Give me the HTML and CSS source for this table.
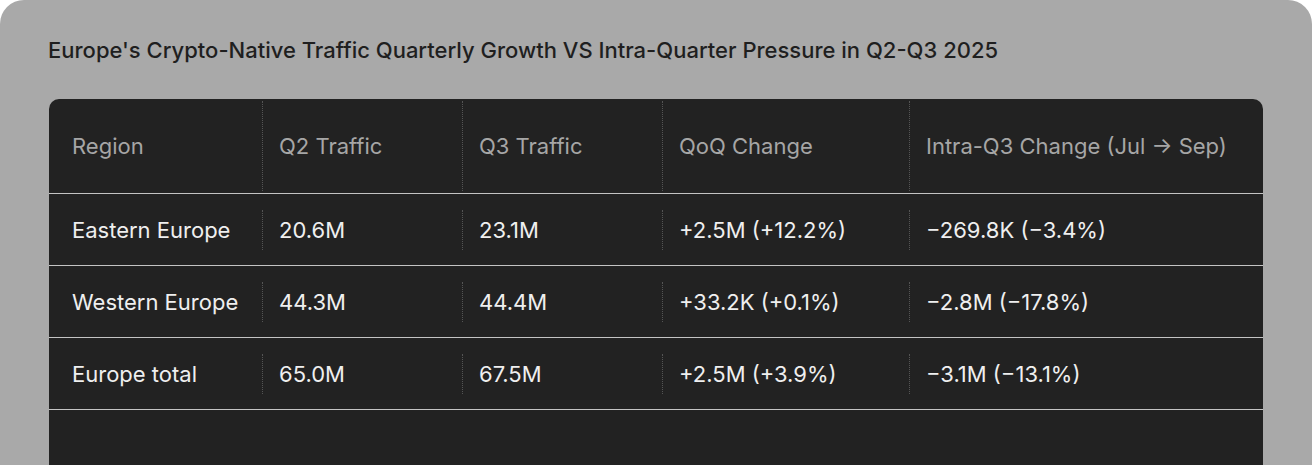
FILE: index.html
```html
<!DOCTYPE html>
<html lang="en">
<head>
<meta charset="utf-8">
<title>Europe Crypto-Native Traffic</title>
<link rel="stylesheet" href="styles.css">
</head>
<body>
<div class="card">
  <h1 class="title">Europe's Crypto-Native Traffic Quarterly Growth VS Intra-Quarter Pressure in Q2-Q3 2025</h1>
  <div class="table">
    <div class="row head">
      <div class="cell c1"><span class="in">Region</span></div>
      <div class="cell c2"><span class="in">Q2 Traffic</span></div>
      <div class="cell c3"><span class="in">Q3 Traffic</span></div>
      <div class="cell c4"><span class="in">QoQ Change</span></div>
      <div class="cell c5"><span class="in">Intra-Q3 Change (Jul → Sep)</span></div>
    </div>
    <div class="row body">
      <div class="cell c1"><span class="in">Eastern Europe</span></div>
      <div class="cell c2"><span class="in">20.6M</span></div>
      <div class="cell c3"><span class="in">23.1M</span></div>
      <div class="cell c4"><span class="in">+2.5M (+12.2%)</span></div>
      <div class="cell c5"><span class="in">−269.8K (−3.4%)</span></div>
    </div>
    <div class="row body">
      <div class="cell c1"><span class="in">Western Europe</span></div>
      <div class="cell c2"><span class="in">44.3M</span></div>
      <div class="cell c3"><span class="in">44.4M</span></div>
      <div class="cell c4"><span class="in">+33.2K (+0.1%)</span></div>
      <div class="cell c5"><span class="in">−2.8M (−17.8%)</span></div>
    </div>
    <div class="row body">
      <div class="cell c1"><span class="in">Europe total</span></div>
      <div class="cell c2"><span class="in">65.0M</span></div>
      <div class="cell c3"><span class="in">67.5M</span></div>
      <div class="cell c4"><span class="in">+2.5M (+3.9%)</span></div>
      <div class="cell c5"><span class="in">−3.1M (−13.1%)</span></div>
    </div>
  </div>
</div>
</body>
</html>
```

FILE: styles.css
```css
html, body {
  margin: 0;
  padding: 0;
  background: #ffffff;
  overflow: hidden;
}
body {
  font-family: Inter, "Liberation Sans", sans-serif;
}
.card {
  width: 1312px;
  box-sizing: border-box;
  background: #a9a9a9;
  border-radius: 24px;
  padding: 36px 49px 0 48px;
  min-height: 600px;
}
.title {
  margin: 0 0 35px 0;
  font-size: 22px;
  line-height: 28px;
  font-weight: 500;
  color: #1f1f1f;
  letter-spacing: 0;
}
.table {
  width: 1214px;
  margin-left: 1px;
  background: #222222;
  border-radius: 10px;
  padding-bottom: 120px;
}
.row {
  display: grid;
  grid-template-columns: 213px 200px 200px 247px 354px;
  border-bottom: 1px solid #c4c4c4;
}
.head {
  height: 94px;
}
.body {
  height: 71px;
}
.cell {
  display: flex;
  align-items: center;
  font-size: 22px;
  letter-spacing: 0;
}
.head .cell {
  color: #a6a6a6;
  padding-top: 2px;
  padding-bottom: 2px;
  align-items: stretch;
}
.head .cell .in {
  display: flex;
  align-items: center;
  width: 100%;
  padding-left: 16px;
  border-left: 1px dotted #555555;
}
.head .c1 .in {
  padding-left: 23px;
  border-left: none;
}
.body .cell {
  color: #efefef;
}
.body .cell .in {
  display: flex;
  align-items: center;
  height: 40px;
  width: 100%;
  padding-left: 16px;
  border-left: 1px dotted #555555;
}
.body .c1 .in {
  padding-left: 23px;
  border-left: none;
}
```
